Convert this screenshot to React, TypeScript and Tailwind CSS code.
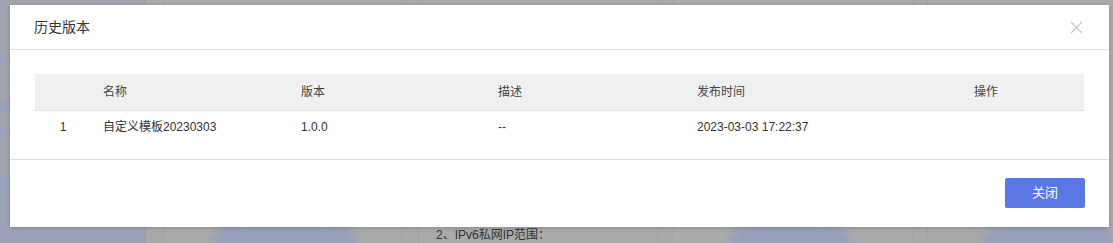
const rows = [
  { idx: 1, name: "自定义模板20230303", version: "1.0.0", desc: "--", time: "2023-03-03 17:22:37" },
];

const cols = [
  { key: "idx", label: "", width: "w-[56px]", align: "text-center" },
  { key: "name", label: "名称", width: "w-[198px]", align: "pl-3" },
  { key: "version", label: "版本", width: "w-[197px]", align: "pl-3" },
  { key: "desc", label: "描述", width: "w-[199px]", align: "pl-3" },
  { key: "time", label: "发布时间", width: "w-[277px]", align: "pl-3" },
  { key: "op", label: "操作", width: "flex-1", align: "pl-3" },
];

function CloseIcon() {
  return (
    <svg width="13" height="13" viewBox="0 0 13 13" className="text-[#c4c4c4]">
      <path d="M1 1 L12 12 M12 1 L1 12" stroke="currentColor" strokeWidth="1.1" fill="none" />
    </svg>
  );
}

function Backdrop() {
  return (
    <div className="flex h-[243px] w-[1113px] bg-[#a8a8a8]">
      <div className="flex w-[151px] flex-col border-r border-[#8f96b8] bg-[#a1a4ad]">
        <div className="h-[58px]" />
        <div className="h-[6px] bg-[#9aa3bb]" />
        <div className="h-[38px]" />
        <div className="h-[10px] bg-[#96a0be]" />
        <div className="h-[16px]" />
        <div className="h-[8px] bg-[#9aa3bb]" />
        <div className="h-[40px]" />
        <div className="h-[10px] bg-[#98a1bd]" />
        <div className="flex-1 bg-[#9ca3b8]" />
      </div>
      <div className="w-[18px] border-r border-[#a0a0a8] bg-[#a9a9a9]" />
      <div className="flex w-[246px] flex-col justify-end border-r border-[#a2a2aa] bg-[#ababab]">
        <div className="mb-[-22px] ml-[48px] h-[44px] w-[145px] rounded-full bg-[#95a0b8] blur-[5px]" />
      </div>
      <div className="w-[18px] border-r border-[#a0a0aa] bg-[#a9a9a9]" />
      <div className="flex w-[247px] flex-col justify-end border-r border-[#a2a2aa] bg-[#aaaaaa]">
        <div className="pb-[1px] pl-[17px] text-[12px] leading-[14px] text-[#333]">2、IPv6私网IP范围：</div>
      </div>
      <div className="w-[16px] border-r border-[#a0a0aa] bg-[#a9a9a9]" />
      <div className="flex w-[248px] flex-col justify-end border-r border-[#a2a2aa] bg-[#ababab]">
        <div className="mb-[-22px] ml-[55px] h-[44px] w-[122px] rounded-full bg-[#95a0b8] blur-[5px]" />
      </div>
      <div className="w-[15px] border-r border-[#a0a0aa] bg-[#a9a9a9]" />
      <div className="flex flex-1 flex-col justify-end bg-[#a9a9a9]">
        <div className="mb-[-22px] ml-[55px] h-[44px] w-[130px] rounded-full bg-[#95a0b8] blur-[5px]" />
      </div>
    </div>
  );
}

export default function App() {
  return (
    <div
      className="relative h-[243px] w-[1113px] overflow-hidden"
      style={{ fontFamily: '"Liberation Sans", "Noto Sans CJK SC", sans-serif' }}
    >
      <Backdrop />
      <div className="absolute left-[10px] top-[5px] flex h-[222px] w-[1099px] flex-col bg-white shadow-[0_1px_4px_rgba(0,0,0,0.2)]">
        <div className="flex h-[45px] items-center justify-between border-b border-[#e0e0e0] pl-[24px] pr-[26px]">
          <span className="text-[14px] text-[#333]">历史版本</span>
          <CloseIcon />
        </div>
        <div className="px-[25px] pb-[16px] pt-[24px]">
          <div className="flex h-[37px] items-center border-b border-[#e2e2e2] bg-[#f0f0f0] text-[12px] text-[#444]">
            {cols.map((c) => (
              <div key={c.key} className={`${c.width} ${c.align}`}>
                {c.label}
              </div>
            ))}
          </div>
          {rows.map((r) => (
            <div key={r.idx} className="flex h-[32px] items-center text-[12px] text-[#333]">
              <div className="w-[56px] text-center">{r.idx}</div>
              <div className="w-[198px] pl-3">{r.name}</div>
              <div className="w-[197px] pl-3">{r.version}</div>
              <div className="w-[199px] pl-3">{r.desc}</div>
              <div className="w-[277px] pl-3">{r.time}</div>
              <div className="flex-1 pl-3" />
            </div>
          ))}
        </div>
        <div className="flex flex-1 items-start justify-end border-t border-[#e0e0e0] pr-[24px] pt-[18px]">
          <button className="h-[30px] w-[80px] rounded-[2px] bg-[#5b77e3] text-[13px] text-white">关闭</button>
        </div>
      </div>
    </div>
  );
}
